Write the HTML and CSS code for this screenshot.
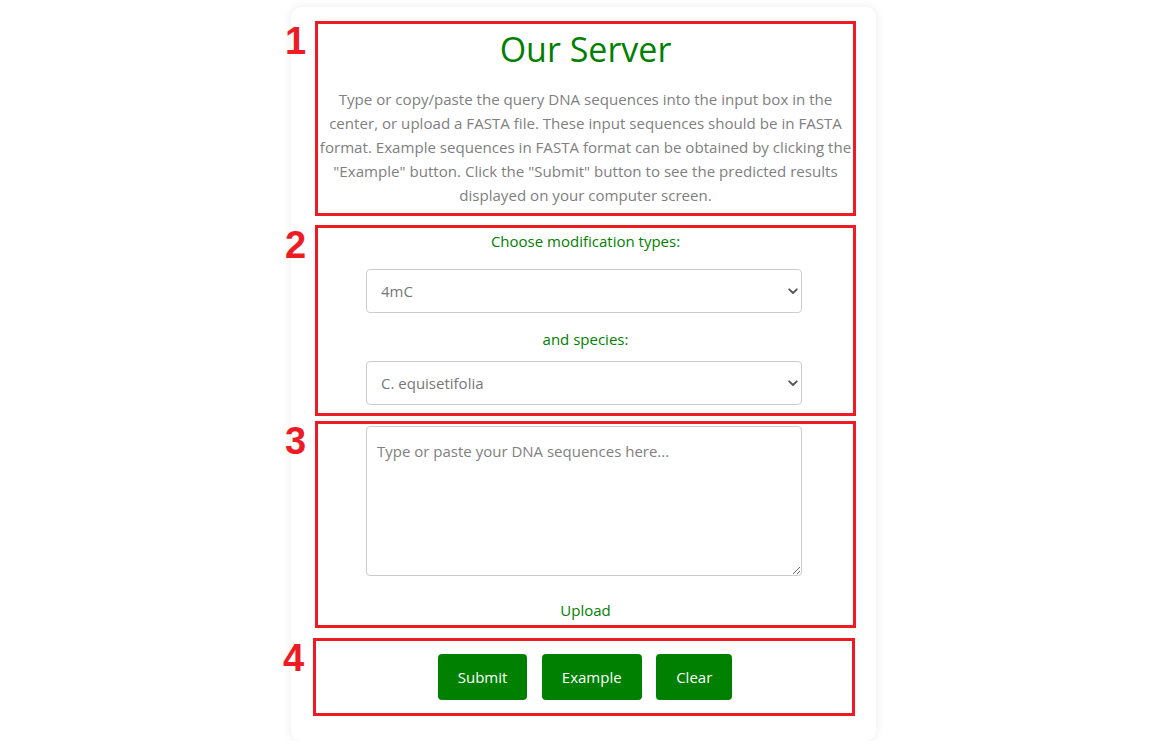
FILE: index.html
```html
<!DOCTYPE html>
<html lang="en">
<head>
<meta charset="utf-8">
<title>Our Server</title>
<link rel="stylesheet" href="styles.css">
</head>
<body>
<main class="card">
  <section class="box box-intro">
    <span class="num">1</span>
    <h1 class="title">Our Server</h1>
    <p class="intro">Type or copy/paste the query DNA sequences into the input box in the center, or upload a FASTA file. These input sequences should be in FASTA format. Example sequences in FASTA format can be obtained by clicking the "Example" button. Click the "Submit" button to see the predicted results displayed on your computer screen.</p>
  </section>

  <section class="box box-choose">
    <span class="num">2</span>
    <label class="label label-first" for="mod">Choose modification types:</label>
    <div class="select-wrap">
      <select id="mod" class="select">
        <option>4mC</option>
        <option>6mA</option>
        <option>5hmC</option>
      </select>
      <svg class="chev" width="10" height="7" viewBox="0 0 10 7"><path d="M1.2 1.3 L5 5 L8.8 1.3" fill="none" stroke="#555" stroke-width="1.8" stroke-linecap="round" stroke-linejoin="round"/></svg>
    </div>
    <label class="label label-second" for="sp">and species:</label>
    <div class="select-wrap">
      <select id="sp" class="select">
        <option>C. equisetifolia</option>
        <option>F. vesca</option>
      </select>
      <svg class="chev" width="10" height="7" viewBox="0 0 10 7"><path d="M1.2 1.3 L5 5 L8.8 1.3" fill="none" stroke="#555" stroke-width="1.8" stroke-linecap="round" stroke-linejoin="round"/></svg>
    </div>
  </section>

  <section class="box box-input">
    <span class="num">3</span>
    <textarea class="seq" placeholder="Type or paste your DNA sequences here..."></textarea>
    <a class="upload" href="#">Upload</a>
  </section>

  <section class="box box-actions">
    <span class="num num4">4</span>
    <div class="buttons">
      <button class="btn" type="button">Submit</button>
      <button class="btn" type="button">Example</button>
      <button class="btn" type="button">Clear</button>
    </div>
  </section>
</main>
</body>
</html>
```

FILE: styles.css
```css
* {
  box-sizing: border-box;
}

html, body {
  margin: 0;
  padding: 0;
  background: #ffffff;
}

body {
  font-family: "Open Sans", "Noto Sans", "Liberation Sans", sans-serif;
  color: #808080;
}

.card {
  width: 585px;
  margin: 7px 0 0 291px;
  padding: 14px 20px 25px 24px;
  background: #ffffff;
  border-radius: 10px;
  box-shadow: 0 0 10px rgba(0, 0, 0, 0.08);
  display: flex;
  flex-direction: column;
}

.box {
  position: relative;
  flex-shrink: 0;
  border: 3px solid #ed1c24;
  width: 541px;
  display: flex;
  flex-direction: column;
  align-items: center;
}

.num {
  position: absolute;
  left: -33px;
  top: -2px;
  font-family: "Liberation Sans", Arial, sans-serif;
  font-weight: bold;
  font-size: 38px;
  line-height: 38px;
  color: #ed1c24;
}

.box-intro {
  height: 195px;
  padding: 3px 0 0;
}

.title {
  margin: 0;
  font-weight: 400;
  font-size: 34px;
  line-height: 44px;
  color: #008000;
}

.intro {
  margin: 16px 0 0;
  font-size: 15.1px;
  line-height: 24px;
  text-align: center;
  color: #808080;
}

.box-choose {
  margin-top: 9px;
  height: 191px;
  padding-top: 1px;
}

.label {
  display: block;
  font-size: 15px;
  line-height: 24px;
  color: #008000;
}

.label-first {
  margin-bottom: 16px;
}

.label-second {
  margin: 14px 0 10px;
}

.select-wrap {
  position: relative;
  width: 436px;
  margin-left: -3px;
}

.select {
  width: 100%;
  height: 44px;
  appearance: none;
  -webkit-appearance: none;
  border: 1px solid #cccccc;
  border-radius: 4px;
  background: #ffffff;
  padding: 0 30px 0 14px;
  font-family: inherit;
  font-size: 15px;
  color: #777777;
}

.chev {
  position: absolute;
  right: 4px;
  top: 19px;
  pointer-events: none;
}

.box-input {
  margin-top: 5px;
  height: 207px;
  padding-top: 2px;
}

.seq {
  width: 436px;
  height: 150px;
  margin-left: -3px;
  border: 1px solid #cccccc;
  border-radius: 4px;
  padding: 12px 10px;
  font-family: inherit;
  font-size: 15px;
  line-height: 24px;
  color: #555555;
  resize: vertical;
}

.seq::placeholder {
  color: #808080;
}

.upload {
  margin-top: 22px;
  font-size: 15px;
  line-height: 24px;
  color: #008000;
  text-decoration: none;
}

.box-actions {
  margin-top: 10px;
  margin-left: -2px;
  width: 542px;
  height: 78px;
  justify-content: center;
}

.buttons {
  display: flex;
  gap: 14.5px;
  margin-left: 2px;
}

.btn {
  height: 46px;
  padding: 0 20px;
  border: none;
  border-radius: 4px;
  background: #008000;
  color: #ffffff;
  font-family: inherit;
  font-size: 15px;
  cursor: pointer;
}
```
